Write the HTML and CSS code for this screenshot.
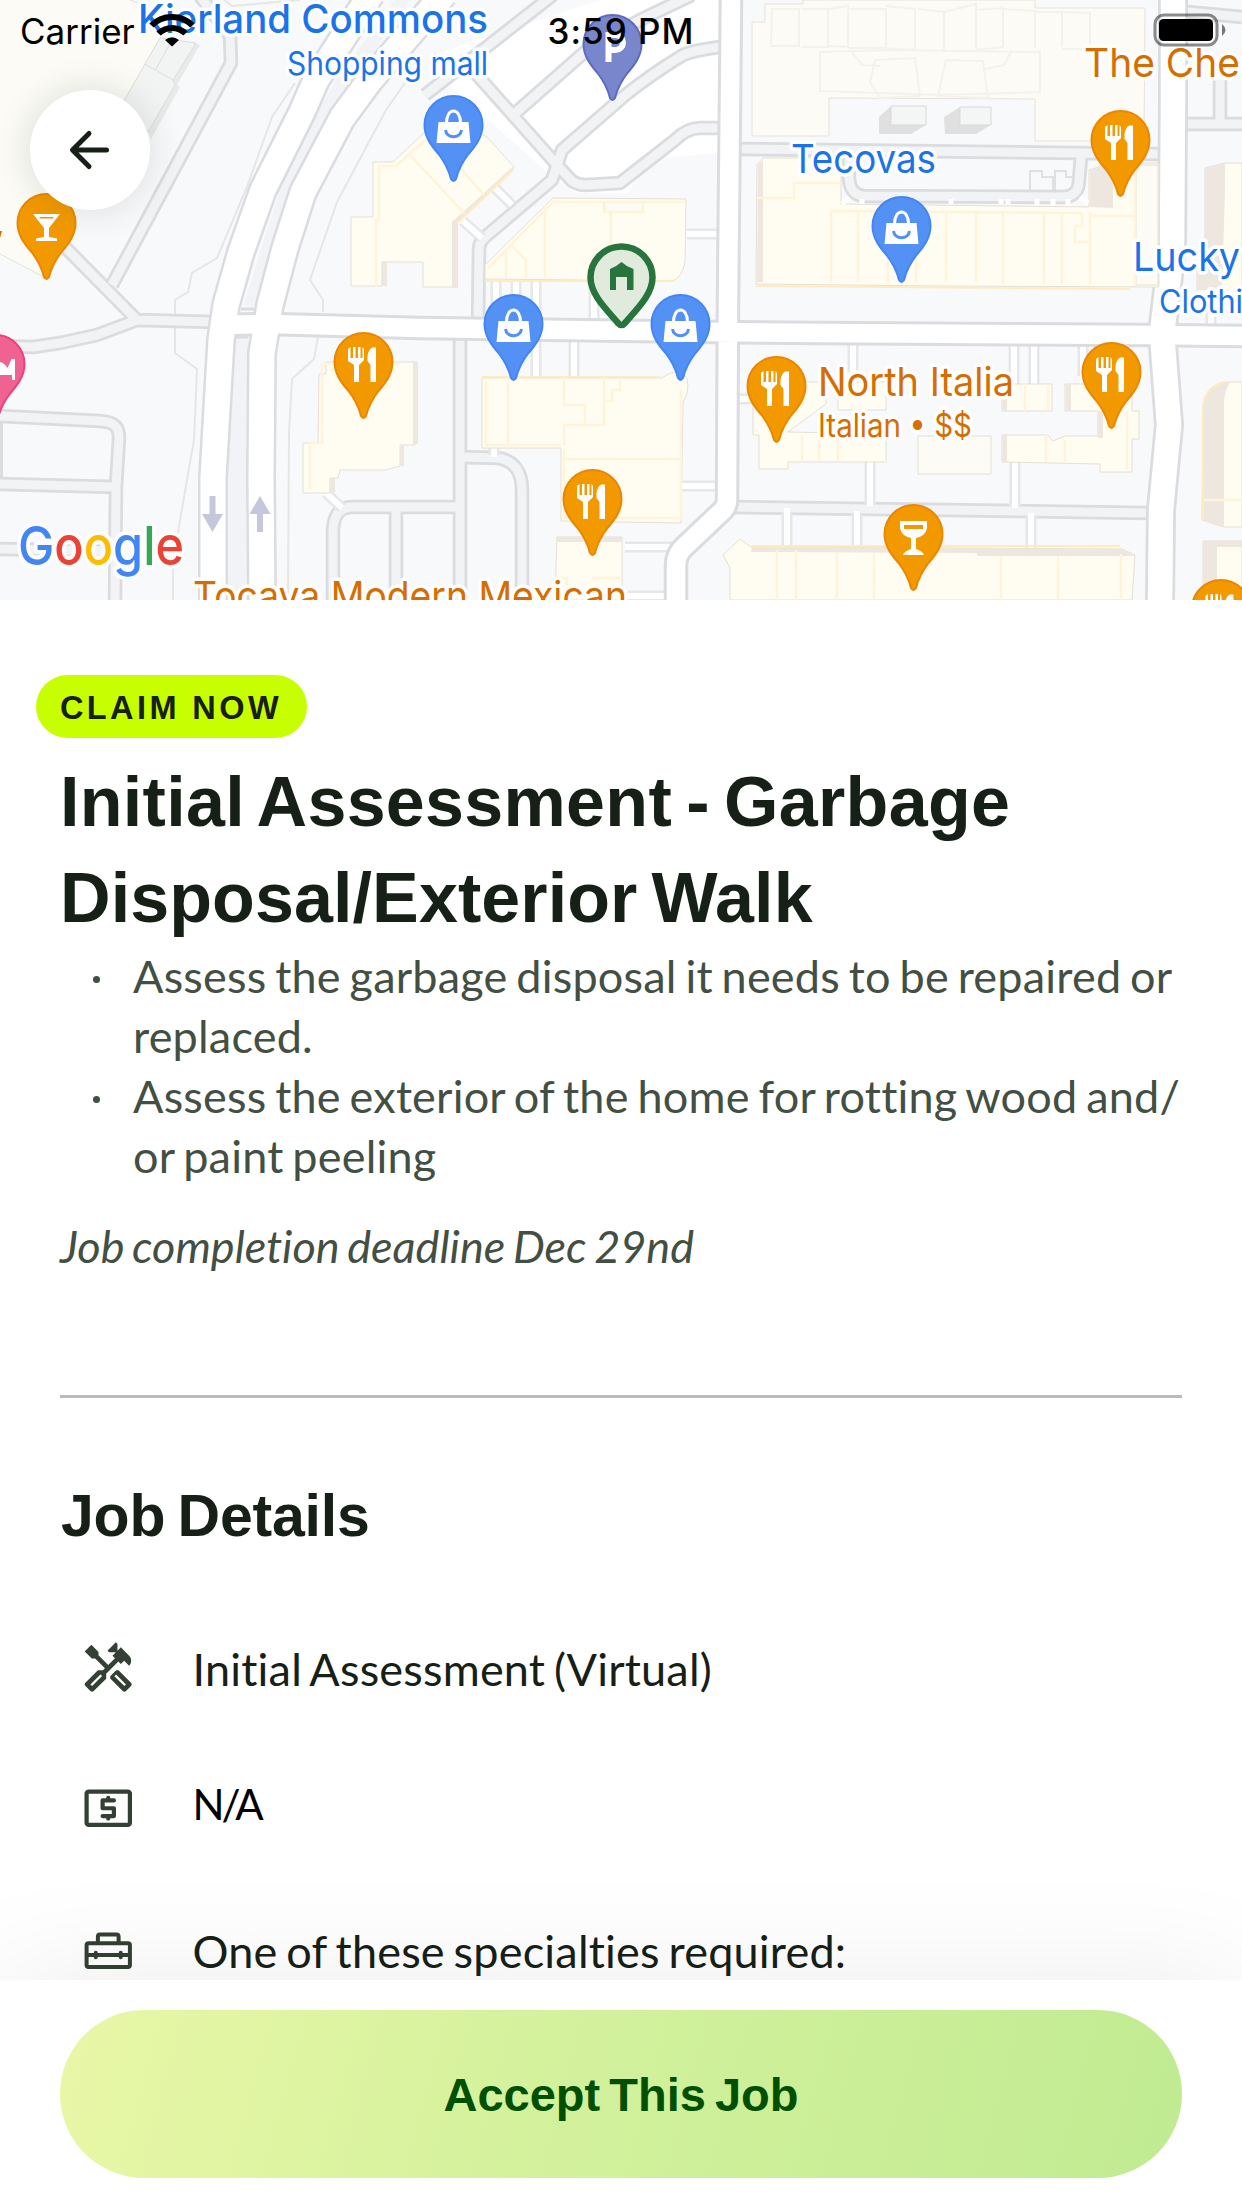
FILE: index.html
```html
<!DOCTYPE html>
<html lang="en">
<head>
<meta charset="utf-8">
<title>Job</title>
<link rel="stylesheet" href="styles.css">
</head>
<body>
<div class="screen">
<header class="map-panel">
<svg class="map" viewBox="0 0 1242 600" width="1242" height="600">
  <defs>
    <path id="pin" d="M-29 0A29 29 0 0 1 29 0C29 12 22 21 15 29C8 38 4.500 46 2.500 54Q0 58 -2.500 54C-4.500 46 -8 38 -15 29C-22 21 -29 12 -29 0Z"/>
    <g id="bag"><use href="#pin" fill="#5491f5" stroke="#4285f4" stroke-width="2"/><path d="M-15-3H15L17 18H-17Z" fill="#fff"/><path d="M-7-2C-7-18 7-18 7-2" fill="none" stroke="#fff" stroke-width="3"/><path d="M-8 5C-7 14 7 14 8 5" fill="none" stroke="#5491f5" stroke-width="3"/></g>
    <g id="food"><use href="#pin" fill="#f29900" stroke="#ea8600" stroke-width="2"/><path d="M-15.500-13L-13-15V-4H-10.500V-15H-8V-4H-5.500V-15H-3V-4H-1V-15L.500-13V-2L-4.500 3V20H-9.500V3L-15.500-1ZM12.500-14.500V20H7V3L4-1V-6Q5-13 9-14.500Z" fill="#fff"/></g>
  </defs>
  <rect width="1242" height="600" fill="#f8f9fb"/>
  <path d="M0 0H130L160 40L75 215L42 276L0 254Z" fill="#fcfbf6"/>
  <path d="M0 254L42 276M130 0L141 4" stroke="#e4e3de" fill="none"/>
  <path d="M196 43L200 45L177 85L180 87L151 139L148 132L173 80Z" fill="#e9e9e9"/>
  <path d="M145 64L160 38L196 43L173 80L175 85L148 132L124 101Z" fill="#f2f4f4" stroke="#dcdddb"/>
  <path d="M145 64L173 80M156 69L172 40" stroke="#dcdddb"/>
  <path d="M432 55L600 0H718V153L660 158L640 172L628 193L575 193L545 170L445 82Z" fill="#fff"/>
  <g fill="none" stroke="#e6e6e6" stroke-width="2">
    <path d="M295 83L272 117L247 187L217 258L192 273L188 292L175 300V353L197 369L194 440L180 520L173 567V600M405 83L386 110L337 202L310 280L323 300V312M318 337L314 359L292 379L289 433L288 600"/>
    <path d="M224 0L232 6L300 0"/>
  </g>
  <g class="road road-lane">
    <path class="casing" d="M200-4L230 36L231 63L112 285M60 242L137 320L215 322M137 320L97 335L60 343L33 347L0 346M0 416L100 421C116 422 119 428 119 438L116 487L115 600M0 484L116 487M0 549L115 551M425 95L553-5M512 116L587 50L640 20L692-5M470 67L557 165M478 325L479 250Q479 242 485 237L552 180L562 150L623 97Q650 75 683 55Q695 50 720 47M557 165L572 181Q578 185 586 185L620 183L675 140Q687 128 700 128H722M738 149L1159 154M849 153V178Q850 195 864 196L1062 197Q1079 197 1079 180L1081 157M1187 12L1242 17M1187 124H1242M1220 80V124M460 338V600M333 600V530Q334 507 352 507H460M396 507V600M460 457L498 458Q522 462 522 490V600M735 507L1147 513"/>
    <path class="fill" d="M200-4L230 36L231 63L112 285M60 242L137 320L215 322M137 320L97 335L60 343L33 347L0 346M0 416L100 421C116 422 119 428 119 438L116 487L115 600M0 484L116 487M0 549L115 551M425 95L553-5M512 116L587 50L640 20L692-5M470 67L557 165M478 325L479 250Q479 242 485 237L552 180L562 150L623 97Q650 75 683 55Q695 50 720 47M557 165L572 181Q578 185 586 185L620 183L675 140Q687 128 700 128H722M738 149L1159 154M849 153V178Q850 195 864 196L1062 197Q1079 197 1079 180L1081 157M1187 12L1242 17M1187 124H1242M1220 80V124M460 338V600M333 600V530Q334 507 352 507H460M396 507V600M460 457L498 458Q522 462 522 490V600M735 507L1147 513"/>
  </g>
  <path d="M1.500 423V478" stroke="#dadce0" stroke-width="3"/>
  <g class="road road-path">
    <path class="casing" d="M536 340V376M574 340V376M594 281V320M682 486H717M625 547H675M628 596H668M787 512V546M735 399H752M494 446V455M853 343V372M1014 343V384M1034 343V384M1083 343V376M870 460V505M1015 462V506M857 514V548M1031 516V549M687 234H720M495 188L512 205M463 221L482 238M496 281V318M516 281V318M536 281V318M326 493L342 508M1133 220H1160M1211 300V328"/>
    <path class="fill" d="M536 336V376M574 336V376M594 281V324M682 486H722M625 547H679M628 596H672M787 508V546M731 399H752M494 446V457M853 339V372M1014 339V384M1034 339V384M1083 339V376M870 460V506M1015 462V508M857 511V548M1031 513V549M687 234H724M495 188L512 205M463 221L482 238M496 281V322M516 281V322M536 281V322M326 493L342 508M1133 220H1164M1211 300V332"/>
  </g>
  <path d="M244 305L262 246L280 190L320 108L336 80L395 0L410 0L355 78L330 110L293 188L272 246L256 308ZM235 336H249L248 353L249 600H227L226 477Z" fill="#f1f3f6"/>
  <g class="road road-main">
    <path class="casing arterial" d="M371-6L316 80L302 112L263 190L241 252L226 305L221 340L213 477V602M444-6L370 80L342 118L303 192L285 248L270 305L262 353L261 477L262 602"/>
    <path class="casing street" d="M215 325L270 324L420 328L717 332L822 333L1150 335L1246 336M731-4L728 300L727 500Q727 507 721 512L684 547Q676 554 676 566V604"/>
    <path class="casing avenue" d="M1173-4V100L1172 250L1163 325V346L1169 425L1161 510L1160 604"/>
    <path class="fill arterial" d="M371-6L316 80L302 112L263 190L241 252L226 305L221 340L213 477V602M444-6L370 80L342 118L303 192L285 248L270 305L262 353L261 477L262 602"/>
    <path class="fill street" d="M215 325L270 324L420 328L717 332L822 333L1150 335L1246 336M731-4L728 300L727 500Q727 507 721 512L684 547Q676 554 676 566V604"/>
    <path class="fill avenue" d="M1173-4V100L1172 250L1163 325V346L1169 425L1161 510L1160 604"/>
  </g>
  <path d="M241 309H254M235 337H248" stroke="#dadce0" stroke-width="3"/>
  <path d="M752 22H765V4H803V0H1035V8H1145L1144 141H1035V99L829 98V136H752Z" fill="#fcfbf6" stroke="#e9e2da"/>
  <g fill="none" stroke="#f4f2ec" stroke-width="2">
    <path d="M772 9H799V46H771ZM801 9H828V47H801M828 9L848 6V47L829 46M849 9H886V48H849M886 6L915 9V50L886 48M918 9L944 12V50M944 12L976 4V49M976 10L1003 8V47L976 50M1003 9L1035 11V48M1035 12H1062V47M1062 12L1090 13V49H1062M820 52L890 50L1040 52V92L940 95L820 91V52M875 60L915 58L920 96L880 98L870 82ZM946 60L983 61L988 98L938 96ZM852 52L862 65L880 66M1012 50L1004 65L985 69"/>
  </g>
  <path d="M879 117L891 106V125H926L911 134H879ZM944 117L960 107V125H991L976 134H945Z" fill="#e0e0e0"/>
  <path d="M891 106H926V125H891ZM960 107H991V125H960Z" fill="#f4f5f5" stroke="#d8d9d9"/>
  <g class="buildings">
    <path d="M373 162H393L425 132L447 115L487 137L514 167L455 220V287H423V262H382V286H351V217H373Z"/>
    <path d="M553 198L686 199L685 262Q682 277 673 281L485 279V265Z"/>
    <path d="M482 378H662Q677 366 687 378Q690 392 683 402L681 523L561 521V448H482Z"/>
    <path d="M557 537H622V600H555Z"/>
    <path d="M326 362H417L415 445H400V466L385 470H340L338 478H330V493H303V443H318L319 374H326Z"/>
    <path d="M757 165L763 158H841V204L1089 207V170L1112 163H1159V287L941 286L756 284Z"/>
    <path d="M1205 168L1225 163H1242V300H1197V270H1205Z"/>
    <path d="M1203 405Q1206 382 1230 382H1242V527H1223L1202 520ZM1203 541H1242V600H1203Z"/>
    <path d="M723 555L740 539L751 547L1122 549L1135 555L1132 600H730V568Z"/>
    <path d="M753 382H826V404L788 432L886 434V462H788V469H759V435H753ZM838 382H886V410H838ZM1002 384H1052V411H1002ZM1065 384H1132V411H1139V439H1132V472H1100V464L1002 462V435H1048L1053 441L1065 436H1098V411H1065Z"/>
    <path class="annex" d="M918 436H991V474H918ZM1136 165H1158V285H1136ZM604 202H643V212H604Z"/>
  </g>
  <path d="M455 220L510 169L514 167L458 223V288H452V221ZM382 261H387V286H381ZM758 165L763 160V282H757ZM1090 170L1113 164V208L1090 207ZM1205 168L1225 163V190L1222 290H1197V270H1205ZM1203 405Q1206 384 1230 382Q1224 392 1224 405V527L1202 520ZM1203 541H1242V547H1217V600H1203ZM752 547L1122 549L1135 556L977 556V553L751 552ZM557 537H622V542H557ZM413 362H418V444H413ZM400 446H404V466H400ZM330 478H335V492H330ZM1002 384H1007V411H1002ZM1066 384H1071V411H1066ZM1098 411H1103V438H1098ZM1002 435H1007V462H1002Z" fill="#eee7df"/>
  <g fill="none" stroke="#fff3d9" stroke-width="2.500">
    <path d="M831 212V282M858 212V282M888 212V282M916 212V282M946 212V282M976 212V282M1003 212V284M1044 212V284M1062 212V284M1090 212V284M1135 170V286M831 211L1082 213M1090 216H1135M1082 213V226H1075V242H1090M757 198H794V183H841"/>
    <path d="M376 287V220H379V166H396L430 136M410 155L465 214M440 145L484 195M545 205V278M488 268L553 202H684M605 205V212H643V202M611 212V245M511 245L526 260V278M506 252V278M486 382V445H561M508 378V445M564 378V405H585V425H564V445M604 378V425H585M605 401H612V390H620V380M564 459H681M564 450V518H681V390M622 578H592M557 578H567V600M310 489V443H322V364H400M777 550V600M796 550V600M837 553V600M874 553V600M1001 556V600M1058 556V600M1121 554V600M802 435V462M819 435V462M838 435V462M1025 384V411M1048 384V411M1046 435V462M1065 440V462M1127 411V470M1203 500H1242"/>
  </g>
  <path d="M485 281H675M457 223L514 169M482 377H660M756 286L1130 289M752 546H1120M1203 520V408Q1205 386 1225 382" fill="none" stroke="#ffebbd" stroke-width="2"/>
  <path d="M1030 190V171H1042V177H1053V190M1055 190V171H1066V177H1075" fill="none" stroke="#dfe0e3" stroke-width="2"/>
  <path d="M862 199V204M951 199V204M1001 199V204M1008 199V204M1037 199V206M1053 199V206M1068 199V206M1080 197L1088 203M842 204L849 197" stroke="#fff" stroke-width="5"/>
  <path d="M209.500 496H215.500V514H223L212.500 532L202 514H209.500ZM257 532V514H249.500L260 496L270.500 514H263V532Z" fill="#c5c8dc"/>

  <g class="place blue">
    <text class="strong" x="138" y="33" textLength="350" lengthAdjust="spacingAndGlyphs">Kierland Commons</text>
    <text class="sub" x="287" y="75" textLength="201" lengthAdjust="spacingAndGlyphs">Shopping mall</text>
    <text x="791" y="173" textLength="145" lengthAdjust="spacingAndGlyphs">Tecovas</text>
    <text x="1133" y="271" textLength="107" lengthAdjust="spacingAndGlyphs">Lucky</text>
    <text class="sub" x="1159" y="313" textLength="84" lengthAdjust="spacingAndGlyphs">Clothi</text>
  </g>
  <g class="place orange">
    <text x="1084" y="77" textLength="156" lengthAdjust="spacingAndGlyphs">The Che</text>
    <text x="818" y="396" textLength="196" lengthAdjust="spacingAndGlyphs">North Italia</text>
    <text class="sub" x="818" y="437" textLength="154" lengthAdjust="spacingAndGlyphs">Italian • $$</text>
    <text x="193" y="610" textLength="434" lengthAdjust="spacingAndGlyphs">Tocaya Modern Mexican</text>
  </g>
  <text class="google" x="18" y="565" textLength="166" lengthAdjust="spacingAndGlyphs"><tspan fill="#4285f4">G</tspan><tspan fill="#ea4335">o</tspan><tspan fill="#fbbc04">o</tspan><tspan fill="#4285f4">g</tspan><tspan fill="#34a853">l</tspan><tspan fill="#ea4335">e</tspan></text>

  <path d="M0 231L2 231L0 238Z" fill="#d56e00"/>
  <g transform="translate(46.500 223)"><use href="#pin" fill="#f29900" stroke="#ea8600" stroke-width="2"/><path d="M-13.500-9H13.500L2.500 5V14L10.500 15.500V18H-10.500V15.500L-2.500 14V5Z" fill="#fff"/><path d="M-7.500-6H7.500L6-4.500H-6Z" fill="#f29900"/></g>
  <g transform="translate(-4.500 364)"><use href="#pin" fill="#f06292" stroke="#ec407a" stroke-width="2"/><path d="M-12 8V-2H4Q8-2 12 4L16-5H19.500V16H16.500V11H-12Z" fill="#fff"/></g>
  <g transform="translate(612.500 44)"><use href="#pin" fill="#7986cb" stroke="#5c6bc0" stroke-width="2"/><path d="M-4 18V-9H3A7 7 0 0 1 3 6H-4" fill="none" stroke="#fff" stroke-width="6"/></g>
  <use href="#bag" x="453.500" y="125"/>
  <use href="#bag" x="901.500" y="226"/>
  <use href="#bag" x="513.500" y="324"/>
  <use href="#bag" x="680.500" y="324"/>
  <use href="#food" x="1120.500" y="140"/>
  <use href="#food" x="363.500" y="362"/>
  <use href="#food" x="592.500" y="499"/>
  <use href="#food" x="776.500" y="386"/>
  <use href="#food" x="1111.500" y="372"/>
  <use href="#food" x="1221" y="609"/>
  <g transform="translate(913.500 534)"><use href="#pin" fill="#f29900" stroke="#ea8600" stroke-width="2"/><path d="M-13.500-13H13.500V-6Q12 2 2.500 4V15Q9 17 10.500 21H-10.500Q-9 17-2.500 15V4Q-12 2-13.500-6Z" fill="#fff"/><path d="M-9.500-9H9.500V-5H-9.500Z" fill="#f29900"/></g>
  <path d="M590.500 277.500A31 31 0 0 1 652.500 277.500C652.500 294 638 308 625 323Q621.500 327 618 323C605 308 590.500 294 590.500 277.500Z" fill="#e0ebdd" stroke="#27743c" stroke-width="6.500"/>
  <path d="M610 290V269Q616 267 621.500 262Q627 267 633.500 269V290H627V277H616V290Z" fill="#27743c"/>
</svg>
<div class="status-bar">
  <div class="status-left">
    <span class="carrier">Carrier</span>
    <svg class="wifi" viewBox="0 0 46 34" width="46" height="34"><g fill="none" stroke="#000" stroke-width="6"><path d="M2.500 12.500C13 1 33 1 43.500 12.500"/><path d="M9.500 20.500C17 13 29 13 36.500 20.500"/></g><path d="M16 27Q23 21.500 30 27L23 33.500Z"/></svg>
  </div>
  <span class="clock">3:59 PM</span>
  <svg class="battery" viewBox="0 0 76 34" width="76" height="34"><rect x="3" y="2" width="62" height="30" rx="9" fill="none" stroke="#000" stroke-opacity=".45" stroke-width="3"/><rect x="7" y="6" width="54" height="22" rx="4.500"/><path d="M70 11Q77 17 70 23Z" fill="#777"/></svg>
</div>
<button class="back" aria-label="Back"><svg viewBox="0 0 60 60" width="60" height="60"><path d="M46.500 30H13M29 13.500L12.500 30L29 46.500" fill="none" stroke="#162016" stroke-width="5" stroke-linecap="round" stroke-linejoin="round"/></svg></button>
</header>

<main class="content">
  <span class="badge">CLAIM NOW</span>
  <h1 class="title"><span class="title-line first">Initial Assessment - Garbage</span><span class="title-line second">Disposal/Exterior Walk</span></h1>
  <ul class="tasks">
    <li>Assess the garbage disposal it needs to be repaired or<br>replaced.</li>
    <li>Assess the exterior of the home for rotting wood and/<br>or paint peeling</li>
  </ul>
  <p class="deadline">Job completion deadline Dec 29nd</p>
  <hr class="divider">
  <h2 class="section-title">Job Details</h2>
  <div class="details">
    <div class="detail kind">
      <svg class="icon" viewBox="0 0 24 24"><path d="M21.670 18.170l-5.300-5.300h-.990l-2.540 2.540v.990l5.300 5.300c.390.390 1.020.390 1.410 0l2.120-2.120c.390-.380.390-1.020 0-1.410zM18.840 19.590l-4.240-4.240.710-.710 4.240 4.240-.710.710z"/><path d="M17.340 10.190l1.410-1.410 2.120 2.120c1.170-1.170 1.170-3.070 0-4.240l-3.540-3.540-1.410 1.410V1.710L15.220 1l-3.540 3.540.710.710h2.830l-1.410 1.410 1.060 1.060-2.890 2.890-4.130-4.130V5.060L4.830 2.040 2 4.870 5.030 7.900h1.410l4.130 4.130-.850.850H7.600l-5.300 5.300c-.390.390-.390 1.020 0 1.410l2.120 2.120c.390.390 1.020.390 1.410 0l5.300-5.300v-2.120l5.150-5.150 1.060 1.050zM9.380 15.340l-4.240 4.240-.710-.710 4.240-4.240.710.710z"/></svg>
      <span>Initial Assessment (Virtual)</span>
    </div>
    <div class="detail pay">
      <svg class="icon" viewBox="0 0 24 24"><rect x="2.800" y="4.900" width="18.400" height="14.200" rx=".9" fill="none" stroke="currentColor" stroke-width="1.800"/><path d="M12 7.600V8.700M12 15.300V16.400M14.400 8.700H9.600V12H14.400V15.300H9.600" fill="none" stroke="currentColor" stroke-width="1.800" stroke-linecap="round" stroke-linejoin="round"/></svg>
      <span>N/A</span>
    </div>
    <div class="detail skills">
      <svg class="icon" viewBox="0 0 24 24"><g fill="none" stroke="currentColor" stroke-width="1.700"><rect x="2.800" y="8.600" width="18.400" height="10.100" rx=".9"/><path d="M7.600 8.400V5.800Q7.600 4.850 8.500 4.850H15.500Q16.400 4.850 16.400 5.800V8.400M2.750 13.600H21.250"/><path d="M6.700 12.600V14.600M17.300 12.600V14.600" stroke-linecap="round"/></g></svg>
      <span>One of these specialties required:</span>
    </div>
  </div>
</main>

<footer class="action-bar"><button class="accept">Accept This Job</button></footer>
</div>
</body>
</html>
```
FILE: styles.css
```css
* { box-sizing: border-box; }
body { margin: 0; background: #fff; font-family: Lato, sans-serif; color: #162016; }
.screen { width: 1242px; height: 2208px; display: flex; flex-direction: column; overflow: hidden; }

.map-panel { position: relative; flex: 0 0 600px; overflow: hidden; }
.map { display: block; }
.road path { fill: none; stroke-linejoin: round; }
.road-lane .casing { stroke: #dadce0; stroke-width: 14.500px; }
.road-lane .fill { stroke: #f1f3f4; stroke-width: 9px; }
.road-path .casing { stroke: #e6e7e8; stroke-width: 11px; }
.road-path .fill { stroke: #fff; stroke-width: 6px; }
.road-main .casing { stroke: #dadce0; }
.road-main .fill { stroke: #fff; }
.road-main .casing.arterial { stroke-width: 30px; }
.road-main .fill.arterial { stroke-width: 25px; }
.road-main .casing.street { stroke-width: 24.500px; }
.road-main .fill.street { stroke-width: 18.500px; }
.road-main .casing.avenue { stroke-width: 30px; }
.road-main .fill.avenue { stroke-width: 24.500px; }
.buildings path { fill: #fffdf1; stroke: #e6dfd3; stroke-width: 1px; }
.buildings .annex { fill: #fcfbf5; }
.place { font-family: Inter, sans-serif; font-size: 40px; stroke: #fff; stroke-width: 7px; stroke-linejoin: round; paint-order: stroke; }
.place .sub { font-size: 32px; }
.place .strong { font-weight: 500; }
.blue { fill: #1a73e8; }
.orange { fill: #d56e00; }
.google { font: 500 54px Inter, sans-serif; stroke: #fdfdfd; stroke-width: 8px; stroke-linejoin: round; paint-order: stroke; }

.status-bar { position: absolute; inset: 0 0 auto 0; height: 60px; display: grid; grid-template-columns: 1fr auto 1fr; align-items: start; color: #000; font: 35px/42px Inter, sans-serif; padding: 10px 20px 0; }
.status-left { display: flex; align-items: flex-start; }
.carrier { width: 129px; flex: none; }
.wifi { margin-top: 3px; }
.clock { font-weight: 500; letter-spacing: 1px; }
.battery { margin: 3px -6px 0 0; justify-self: end; }
.back { position: absolute; left: 30px; top: 90px; width: 120px; height: 120px; border: 0; border-radius: 50%; background: #fff; padding: 0; display: grid; place-items: center; box-shadow: 0 0 36px rgba(22, 40, 22, .14); }

.content { flex: 1 1 0; min-height: 0; padding: 75px 60px 0; display: flex; flex-direction: column; font-variant-ligatures: none; }
.badge { align-self: flex-start; flex: none; margin-left: -24px; width: 271px; height: 63px; border-radius: 32px; background: #c8ff00; padding-left: 24px; font: 700 32.500px/67px "Liberation Sans", Arial, sans-serif; letter-spacing: 3.400px; white-space: nowrap; }
.title { margin: 16px 0 0; font: 700 70px/96px "Liberation Sans", Arial, sans-serif; color: #162016; white-space: nowrap; }
.title-line { display: block; }
.first { letter-spacing: .3px; word-spacing: -5.500px; }
.second { letter-spacing: .1px; word-spacing: -5.500px; }
.tasks { list-style: none; margin: 0; padding: 0; color: #424f42; font-size: 45px; line-height: 60px; letter-spacing: .2px; word-spacing: -2.900px; white-space: nowrap; }
.tasks li { position: relative; padding-left: 73px; }
.tasks li::before { content: ""; position: absolute; left: 33px; top: 30px; width: 7px; height: 7px; border-radius: 50%; background: #424f42; }
.deadline { margin: 30px 0 0; font-size: 45px; line-height: 60px; font-style: italic; word-spacing: -2.900px; color: #424f42; }
.divider { width: 100%; margin: 119px 0 0; border: 0; height: 3px; flex: none; background: #b8bbb8; }
.section-title { margin: 78px 0 0 1px; font: 700 59px/80px "Liberation Sans", Arial, sans-serif; letter-spacing: -.2px; word-spacing: -4px; }
.details { display: flex; flex-direction: column; }
.detail { display: flex; align-items: center; height: 60px; flex: none; padding-left: 20px; gap: 56px; font-size: 45px; line-height: 60px; letter-spacing: .2px; word-spacing: -2.900px; white-space: nowrap; }
.icon { width: 56.500px; height: 56.500px; flex: none; color: #334033; fill: currentColor; }
.kind { margin-top: 83px; }
.kind .icon { margin-top: -2px; }
.pay { margin-top: 75px; font-size: 42px; letter-spacing: -3px; color: #000; }
.pay .icon { margin-top: 9px; }
.skills { margin-top: 87px; }

.action-bar { flex: 0 0 228px; position: relative; background: #fff; padding: 30px 60px; box-shadow: 0 0 120px rgba(0, 0, 0, .08); }
.accept { display: block; width: 100%; height: 168px; border: 0; border-radius: 84px; background: linear-gradient(105deg, #e9f7a7, #d3f19c 45%, #c0eb92); color: #005000; font: 700 47px/168px "Liberation Sans", Arial, sans-serif; word-spacing: -4px; }
```
